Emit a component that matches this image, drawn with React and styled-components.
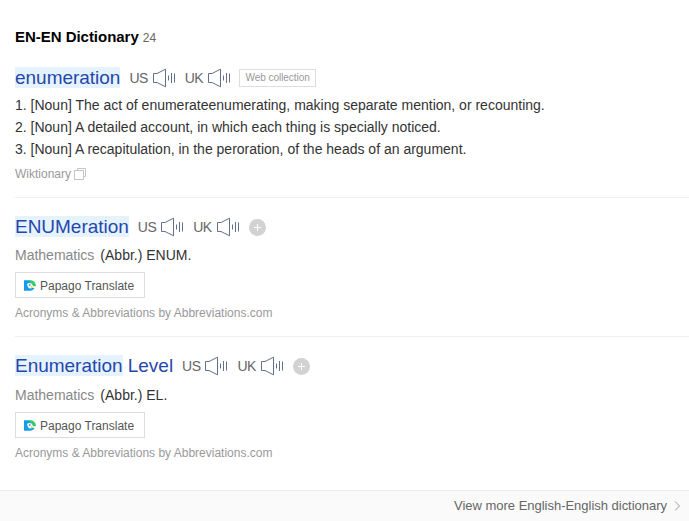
import React from 'react';
import styled, { createGlobalStyle } from 'styled-components';

const GlobalStyle = createGlobalStyle`
  body {
    margin: 0;
    background: #fff;
    font-family: "Liberation Sans", Arial, sans-serif;
    color: #333;
    white-space: nowrap;
  }
`;

const Page = styled.main`
  display: flex;
  flex-direction: column;
  height: 521px;
  box-sizing: border-box;
  overflow: hidden;
`;

const Header = styled.header`
  display: flex;
  align-items: baseline;
  gap: 4px;
  padding: 28px 15px 0;
  box-sizing: border-box;
  height: 58px;
`;

const Title = styled.h2`
  margin: 0;
  font-size: 15px;
  line-height: 18px;
  letter-spacing: -0.03px;
  color: #000;
`;

const Count = styled.span`
  font-size: 12px;
  line-height: 18px;
  color: #666;
`;

const Entry = styled.article`
  box-sizing: border-box;
  height: ${(p) => p.$height}px;
  margin-left: 15px;
  padding-top: ${(p) => p.$top}px;
  border-bottom: ${(p) => (p.$last ? '0' : '1px solid #eee')};
`;

const WordRow = styled.div`
  display: flex;
  align-items: center;
  height: 24px;
`;

const Word = styled.h3`
  margin: 0 9px 0 0;
  font-size: 19px;
  font-weight: 400;
  line-height: 24px;
  letter-spacing: -0.02px;
  color: #2647ac;
`;

const Mark = styled.mark`
  color: inherit;
  background: #e5f3ff;
`;

const Pronunciation = styled.span`
  display: flex;
  align-items: center;
  gap: 4px;
  margin-right: 9px;
  font-size: 14px;
  line-height: 20px;
  letter-spacing: -0.55px;
  color: #666;
`;

const Speaker = styled.svg`
  display: block;
  width: 24px;
  height: 20px;
  fill: none;
  stroke: #64708b;
`;

const Tag = styled.span`
  box-sizing: border-box;
  width: 77px;
  height: 18px;
  margin-left: -1px;
  border: 1px solid #ddd;
  font-size: 10px;
  line-height: 16px;
  letter-spacing: -0.04px;
  text-align: center;
  color: #999;
`;

const AddIcon = styled.svg`
  display: block;
  width: 17px;
  height: 17px;
`;

const Definitions = styled.ol`
  margin: 4px 0 0;
  padding: 0;
  list-style: none;
  font-size: 14px;
  line-height: 22px;
`;

const Source = styled.div`
  display: flex;
  align-items: center;
  gap: 3px;
  margin-top: ${(p) => p.$top}px;
  font-size: 12px;
  line-height: 16px;
  color: #999;
`;

const CopyIcon = styled.svg`
  width: 12px;
  height: 12px;
  fill: #fff;
  stroke: #c4c4c4;
`;

const Meaning = styled.p`
  display: flex;
  gap: 6px;
  margin: ${(p) => p.$gap}px 0 0;
  font-size: 14px;
  line-height: 22px;
`;

const Field = styled.span`
  color: #888;
`;

const PapagoButton = styled.button`
  display: flex;
  align-items: center;
  gap: 4px;
  box-sizing: border-box;
  width: 130px;
  height: 26px;
  margin: 6px 0 0;
  padding: 1px 8px 0;
  border: 1px solid #ddd;
  background: #fff;
  font-family: inherit;
  font-size: 12px;
  color: #555;
`;

const PapagoLogo = styled.svg`
  width: 12px;
  height: 11px;
`;

const Footer = styled.footer`
  display: flex;
  align-items: center;
  justify-content: flex-end;
  gap: 7px;
  box-sizing: border-box;
  height: 31px;
  padding-right: 8px;
  border-top: 1px solid #eee;
  background: #fafafa;
  font-size: 13px;
  letter-spacing: -0.02px;
  color: #666;
`;

const FooterLabel = styled.span`
  line-height: 16px;
  margin-bottom: 1px;
`;

const Arrow = styled.svg`
  width: 7px;
  height: 10px;
  fill: none;
  stroke: #999;
`;

function Pron({ label }) {
  return (
    <Pronunciation>
      {label}
      <Speaker viewBox="0 0 24 20">
        <path d="M1.5 5.5H5L13.5 1.2V18.8L5 14.5H1.5Z" />
        <path d="M16.5 7.5V12.5M19.5 5V15M22.5 5.5V14.5" />
      </Speaker>
    </Pronunciation>
  );
}

function Add() {
  return (
    <AddIcon viewBox="0 0 17 17">
      <circle cx="8.5" cy="8.5" r="8.5" fill="#d2d2d2" />
      <path d="M8.5 5V12M5 8.5H12" stroke="#fff" />
    </AddIcon>
  );
}

function Papago() {
  return (
    <PapagoButton>
      <PapagoLogo viewBox="0 0 12 11">
        <path d="M0 .3H6L8 5L7.5 7.5L10.5 8.3C9.5 10 8 10.7 6 10.7H0Z" fill="#159de8" />
        <path d="M4.5 .4C9 -.7 12 2.2 12 6.3H9L7 3Z" fill="#35cc6b" />
        <path d="M3 4.5C4 2.4 7.7 2.5 8.6 5.5L8 8C6.5 8.9 4.5 8.5 4 7Z" fill="#e9fbff" />
        <path d="M7 5.8L9.7 7.8L7 8.2Z" fill="#ffd34d" />
        <circle cx="5.8" cy="5" r=".7" fill="#174b94" />
      </PapagoLogo>
      Papago Translate
    </PapagoButton>
  );
}

function Abbreviation({ word, meaning, gap, ...layout }) {
  return (
    <Entry {...layout}>
      <WordRow>
        {word}
        <Pron label="US" />
        <Pron label="UK" />
        <Add />
      </WordRow>
      <Meaning $gap={gap}>
        <Field>Mathematics</Field>
        <span>{meaning}</span>
      </Meaning>
      <Papago />
      <Source $top={7}>Acronyms &amp; Abbreviations by Abbreviations.com</Source>
    </Entry>
  );
}

export default function App() {
  return (
    <>
      <GlobalStyle />
      <Page>
        <Header>
          <Title>EN-EN Dictionary</Title>
          <Count>24</Count>
        </Header>
        <Entry $height={140} $top={8}>
          <WordRow>
            <Word><Mark>enumeration</Mark></Word>
            <Pron label="US" />
            <Pron label="UK" />
            <Tag>Web collection</Tag>
          </WordRow>
          <Definitions>
            <li>1. [Noun] The act of enumerateenumerating, making separate mention, or recounting.</li>
            <li>2. [Noun] A detailed account, in which each thing is specially noticed.</li>
            <li>3. [Noun] A recapitulation, in the peroration, of the heads of an argument.</li>
          </Definitions>
          <Source $top={6}>
            Wiktionary
            <CopyIcon viewBox="0 0 12 12">
              <path d="M3.5 2.5V.5H11.5V8.5H9.5" />
              <rect x=".5" y="2.5" width="9" height="9" />
            </CopyIcon>
          </Source>
        </Entry>
        <Abbreviation
          $height={139}
          $top={17}
          gap={5}
          word={<Word><Mark>ENUMeration</Mark></Word>}
          meaning="(Abbr.) ENUM."
        />
        <Abbreviation
          $height={153}
          $top={17}
          $last
          gap={6}
          word={<Word><Mark>Enumeration</Mark> Level</Word>}
          meaning="(Abbr.) EL."
        />
        <Footer>
          <FooterLabel>View more English-English dictionary</FooterLabel>
          <Arrow viewBox="0 0 7 10"><path d="M1 .5L5.5 5L1 9.5" /></Arrow>
        </Footer>
      </Page>
    </>
  );
}
